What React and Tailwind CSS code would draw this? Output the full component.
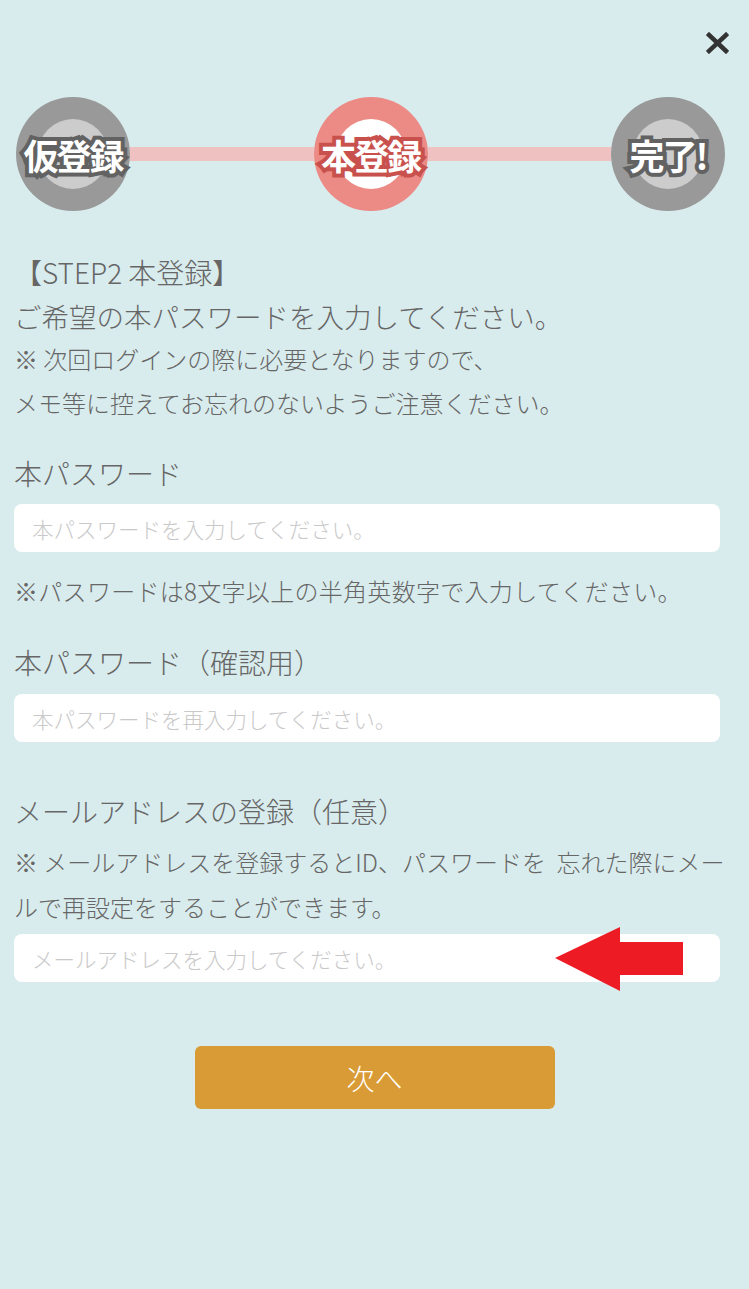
import { useState } from 'react';

const jp = { fontFamily: '"Noto Sans CJK JP", "Noto Sans", sans-serif' };

const StepCircle = ({ label, active }) => (
  <div
    className={`relative flex items-center justify-center w-[114px] h-[114px] shrink-0 rounded-full ${active ? 'bg-[#ec8b86]' : 'bg-[#999999]'}`}
  >
    <div className={`w-[70px] h-[70px] rounded-full ${active ? 'bg-white' : 'bg-[#cccccc]'}`} />
    {/* label sits over the inner disc */}
    <span
      className={`absolute inset-0 flex items-center justify-center text-[35px] font-bold leading-none text-white tracking-[-2px] [paint-order:stroke_fill] ${active ? '[-webkit-text-stroke:8px_#c9514d]' : '[-webkit-text-stroke:8px_#626262]'}`}
    >
      {label}
    </span>
  </div>
);

const Field = ({ placeholder, children }) => (
  <div className="relative">
    <input
      type="text"
      placeholder={placeholder}
      className="block w-full h-12 rounded-lg bg-white pl-[18px] text-[21.5px] font-light text-[#666] outline-none placeholder:text-[#c9c9c9]"
      style={jp}
    />
    {children}
  </div>
);

const App = () => {
  const [open] = useState(true);
  if (!open) return null;

  return (
    <div className="min-h-[1289px] w-full bg-[#d9eced] font-light text-[#666666]" style={jp}>
      {/* Close */}
      <div className="flex justify-end pt-[32px] pr-[20px]">
        <svg width="23" height="22" viewBox="0 0 23 22">
          <path d="M3 3L20 19M20 3L3 19" stroke="#333333" strokeWidth="4.5" strokeLinecap="square" />
        </svg>
      </div>

      {/* Steps */}
      <div className="mt-[43px] flex items-center pl-[16px] pr-[24px]">
        <StepCircle label="仮登録" />
        <div className="h-[14px] flex-1 bg-[#f0c1c1]" />
        <StepCircle label="本登録" active />
        <div className="h-[14px] flex-1 bg-[#f0c1c1]" />
        <StepCircle label="完了!" />
      </div>

      <div className="pl-[14px] pr-[29px]">
        {/* Intro */}
        <div className="mt-[38px]">
          <p className="text-[28px] leading-[46px]">【STEP2 本登録】</p>
          <p className="text-[27.5px] leading-[42px]">ご希望の本パスワードを入力してください。</p>
          <p className="text-[24px] leading-[44px]">※ 次回ログインの際に必要となりますので、</p>
          <p className="text-[24px] leading-[44px]">メモ等に控えてお忘れのないようご注意ください。</p>
        </div>

        {/* Password */}
        <p className="mt-[25px] text-[28px] leading-[46px]">本パスワード</p>
        <div className="mt-[8px]">
          <Field placeholder="本パスワードを入力してください。" />
        </div>
        <p className="mt-[16px] text-[24px] leading-[46px] tracking-[0.3px]">※パスワードは8文字以上の半角英数字で入力してください。</p>

        {/* Confirm */}
        <p className="mt-[25px] text-[28px] leading-[46px]">本パスワード（確認用）</p>
        <div className="mt-[9px]">
          <Field placeholder="本パスワードを再入力してください。" />
        </div>

        {/* Mail */}
        <p className="mt-[46px] text-[28px] leading-[46px]">メールアドレスの登録（任意）</p>
        <p className="mt-[5px] w-[728px] text-[24px] leading-[45px]">
          ※ メールアドレスを登録するとID、パスワードを&nbsp;&nbsp;忘れた際にメールで再設定をすることができます。
        </p>
        <div className="mt-[5px]">
          <Field placeholder="メールアドレスを入力してください。">
            <svg
              className="absolute left-[541px] top-[-7px] pointer-events-none"
              width="128"
              height="64"
              viewBox="0 0 128 64"
            >
              <polygon points="0,31 65,0 65,15 128,15 128,48 65,48 65,64" fill="#ed1c24" />
            </svg>
          </Field>
        </div>
      </div>

      {/* Next */}
      <div className="mt-[64px] flex justify-center">
        <button className="flex h-[63px] w-[360px] items-center justify-center rounded-md bg-[#d99b35] text-[28px] font-light text-white">
          次へ
        </button>
      </div>
    </div>
  );
};

export default App;
